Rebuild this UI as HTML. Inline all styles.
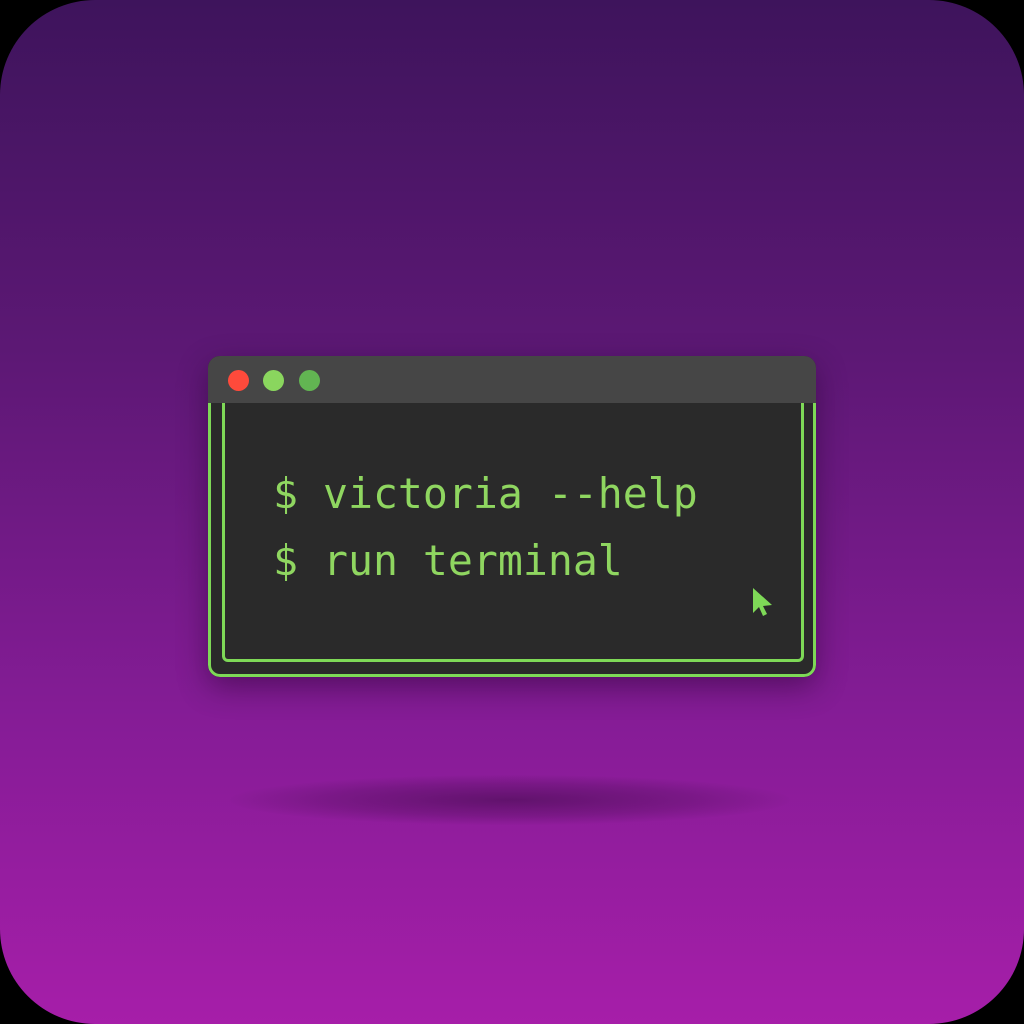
<!DOCTYPE html>
<html><head><style>
html,body{margin:0;padding:0;background:#000;width:1024px;height:1024px;overflow:hidden}
.bg{position:absolute;left:0;top:0;width:1024px;height:1024px;border-radius:95px;background:linear-gradient(180deg,#3e145c 0%,#5d1875 35%,#851c96 70%,#a61ea9 100%)}
.shadow{position:absolute;left:230px;top:775px;width:560px;height:50px;border-radius:50%;background:radial-gradient(ellipse at center,rgba(60,10,70,0.55) 0%,rgba(60,10,70,0.25) 45%,rgba(60,10,70,0) 72%)}
.win{position:absolute;left:208px;top:356px;width:608px;height:321px;border-radius:12px;background:#2a2a2a;box-shadow:0 10px 30px rgba(30,0,40,0.45);overflow:hidden}
.bar{position:absolute;left:0;top:0;width:608px;height:47px;background:#464646}
.outer{position:absolute;left:0;top:40px;width:602px;height:278px;border:3px solid #7ed957;border-top:none;border-radius:0 0 12px 12px}
.inner{position:absolute;left:14px;top:47px;width:576px;height:256px;border:3px solid #7ed957;border-top:none;border-radius:0 0 6px 6px}
.dot{position:absolute;top:14px;width:21px;height:21px;border-radius:50%}
.txt{position:absolute;left:65px;font-family:"DejaVu Sans Mono","Liberation Mono",monospace;font-size:41.5px;color:#8fd660;white-space:pre}
</style></head><body>
<div class="bg"></div>
<div class="shadow"></div>
<div class="win">
 <div class="outer"></div>
 <div class="inner"></div>
 <div class="bar"></div>
 <div class="dot" style="left:20px;background:#fe4a3b"></div>
 <div class="dot" style="left:55px;background:#8ad65e"></div>
 <div class="dot" style="left:91px;background:#62b552"></div>
 <div class="txt" style="top:113px">$ victoria --help</div>
 <div class="txt" style="top:180px">$ run terminal</div>
 <svg style="position:absolute;left:543px;top:231px" width="24" height="34" viewBox="0 0 24 34"><path d="M2 1 L2 26 L8 20 L12 29 L16 27 L12 19 L21 18 Z" fill="#7ed957"/></svg>
</div>
</body></html>
